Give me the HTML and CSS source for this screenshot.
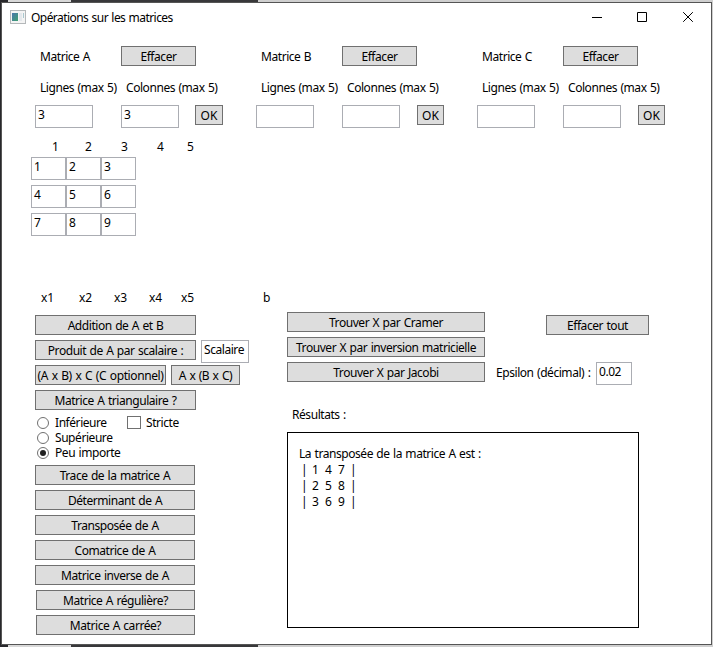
FILE: index.html
```html
<!DOCTYPE html>
<html lang="fr">
<head>
<meta charset="utf-8">
<title>Opérations sur les matrices</title>
<link rel="stylesheet" href="styles.css">
</head>
<body>
<main class="window">
  <header class="titlebar">
    <svg class="app-icon" width="16" height="14" viewBox="0 0 16 14"><defs><linearGradient id="screen" x2="1" y2="1"><stop stop-color="#4a76ad"/><stop offset="1" stop-color="#3fa070"/></linearGradient></defs><rect x=".5" y=".5" width="15" height="13" fill="#f4f4f4" stroke="#b4b8ba"/><rect x="2" y="3" width="6" height="8" fill="url(#screen)"/><rect x="9" y="3" width="3" height="8" fill="#e4e8ec"/><rect x="13" y="3" width="1" height="5" fill="#a9c8cf"/></svg>
    <h1 class="title">Opérations sur les matrices</h1>
    <svg class="controls" width="101" height="10" viewBox="0 0 101 10" fill="none" stroke="#000"><path d="M0 5.500H10M45.500.500h9v9h-9zM91.200.200l9.600 9.600M100.800.200l-9.600 9.600"/></svg>
  </header>

  <section class="matrices">
    <div class="matrix">
      <div class="matrix-head"><span>Matrice A</span><button class="btn clear">Effacer</button></div>
      <div class="size-labels"><span>Lignes (max 5)</span><span>Colonnes (max 5)</span></div>
      <div class="size-fields"><div class="field">3</div><div class="field">3</div><button class="btn ok wide">OK</button></div>
    </div>
    <div class="matrix">
      <div class="matrix-head"><span>Matrice B</span><button class="btn clear">Effacer</button></div>
      <div class="size-labels"><span>Lignes (max 5)</span><span>Colonnes (max 5)</span></div>
      <div class="size-fields"><div class="field"></div><div class="field"></div><button class="btn ok">OK</button></div>
    </div>
    <div class="matrix">
      <div class="matrix-head"><span>Matrice C</span><button class="btn clear">Effacer</button></div>
      <div class="size-labels"><span>Lignes (max 5)</span><span>Colonnes (max 5)</span></div>
      <div class="size-fields"><div class="field"></div><div class="field"></div><button class="btn ok">OK</button></div>
    </div>
  </section>

  <div class="col-numbers"><span>1</span><span>2</span><span>3</span><span>4</span><span>5</span></div>
  <section class="cells">
    <div class="field">1</div><div class="field">2</div><div class="field">3</div>
    <div class="field">4</div><div class="field">5</div><div class="field">6</div>
    <div class="field">7</div><div class="field">8</div><div class="field">9</div>
  </section>
  <div class="unknowns"><span>x1</span><span>x2</span><span>x3</span><span>x4</span><span>x5</span><span>b</span></div>

  <div class="workspace">
    <section class="operations">
      <button class="btn op">Addition de A et B</button>
      <div class="row"><button class="btn op">Produit de A par scalaire :</button><div class="field scalar">Scalaire</div></div>
      <div class="row"><button class="btn triple">(A x B) x C (C optionnel)</button><button class="btn pair">A x (B x C)</button></div>
      <button class="btn op">Matrice A triangulaire ?</button>
      <div class="options">
        <div class="radios">
          <label class="option"><i class="radio"></i>Inférieure</label>
          <label class="option"><i class="radio"></i>Supérieure</label>
          <label class="option"><i class="radio checked"></i>Peu importe</label>
        </div>
        <label class="option strict"><i class="check"></i>Stricte</label>
      </div>
      <button class="btn query">Trace de la matrice A</button>
      <button class="btn query">Déterminant de A</button>
      <button class="btn query">Transposée de A</button>
      <button class="btn query">Comatrice de A</button>
      <button class="btn query">Matrice inverse de A</button>
      <button class="btn query inset">Matrice A régulière?</button>
      <button class="btn query inset">Matrice A carrée?</button>
    </section>
    <section class="solving">
      <div class="solvers">
        <div class="methods">
          <button class="btn">Trouver X par Cramer</button>
          <button class="btn">Trouver X par inversion matricielle</button>
          <button class="btn">Trouver X par Jacobi</button>
        </div>
        <div class="extras">
          <button class="btn clear-all">Effacer tout</button>
          <div class="epsilon"><span>Epsilon (décimal) :</span><div class="field">0.02</div></div>
        </div>
      </div>
      <div class="results-label">Résultats :</div>
      <div class="results">
        <div class="result-title">La transposée de la matrice A est :</div>
        <div class="line"><b>|</b><span>1</span><span>4</span><span>7</span><b>|</b></div>
        <div class="line"><b>|</b><span>2</span><span>5</span><span>8</span><b>|</b></div>
        <div class="line"><b>|</b><span>3</span><span>6</span><span>9</span><b>|</b></div>
      </div>
    </section>
  </div>
</main>
</body>
</html>
```
FILE: styles.css
```css
* { box-sizing: border-box; }
body {
  margin: 0;
  width: 713px;
  height: 647px;
  padding: 2px 1px 2px 1px;
  overflow: hidden;
  font: 12px/16px "Noto Sans", sans-serif;
  letter-spacing: -0.44px;
  word-spacing: 0.7px;
  color: #000;
  white-space: nowrap;
  background:
    linear-gradient(#28282b, #28282b) 0 0 / 1px 100% no-repeat,
    linear-gradient(90deg, #28282b 8px, #d8d8d8 8px 71px, #38383a 71px 258px, #cfcfcf 258px);
}
.window {
  height: 643px;
  width: 711px;
  border: 1px solid #555;
  background: #fff;
  display: flex;
  flex-direction: column;
}
.titlebar { display: flex; height: 30px; padding: 7px 18px 0 8px; }
.title { margin: 0 0 0 5px; font-size: 12px; font-weight: 400; line-height: 16px; letter-spacing: -0.55px; }
.controls { margin: 2px 0 0 auto; }
.btn {
  height: 20px;
  padding: 2px 0 0;
  border: 1px solid #707070;
  border-radius: 0;
  background: #ddd;
  font: inherit;
  line-height: 16px;
  letter-spacing: inherit;
  word-spacing: inherit;
  color: inherit;
  text-align: center;
  flex: none;
}
.field { height: 23px; border: 1px solid #abadb3; padding: 1px 2px; line-height: 16px; background: #fff; }
.matrices { display: grid; grid-template-columns: repeat(3, 221px); padding: 13px 0 0 33px; height: 105px; }
.matrix-head { display: grid; grid-template-columns: 81px 75px; padding-left: 5px; line-height: 21px; height: 34px; }
.matrix-head .btn { margin-left: 0; }
.size-labels { display: grid; grid-template-columns: 86px 1fr; padding-left: 5px; height: 25px; }
.size-fields { display: grid; grid-template-columns: 58px 58px 28px; column-gap: 28px; }
.size-fields .ok { margin-left: -11px; width: 27px; letter-spacing: 0; }
.size-fields .ok.wide { margin-left: -12px; width: 28px; }
.col-numbers { display: grid; grid-template-columns: 33px 36px 36px 30px 20px; padding-left: 50px; height: 16px; margin-top: 1px; }
.cells { display: grid; grid-template-columns: repeat(3, 35px); row-gap: 5px; padding: 2px 0 0 29px; height: 135px; align-content: start; }
.unknowns { display: grid; grid-template-columns: 38px 35px 35px 32px 82px 20px; padding: 0 0 0 39px; height: 22px; letter-spacing: -0.2px; }
.workspace { display: flex; padding-left: 33px; }
.operations { width: 252px; display: flex; flex-direction: column; gap: 5px; padding-top: 3px; }
.row { display: flex; height: 20px; gap: 5px; }
.op { width: 161px; }
.triple { width: 131px; letter-spacing: -0.4px; word-spacing: 0.9px; }
.pair { width: 69px; }
.scalar { width: 48px; }
.options { display: flex; height: 45px; }
.radios { width: 92px; }
.option { display: flex; align-items: center; height: 15px; line-height: 15px; }
.radio { width: 12px; height: 12px; margin: 0 6px 0 2px; border: 1px solid #707070; border-radius: 50%; display: grid; place-items: center; }
.radio.checked::after { content: ""; width: 6px; height: 6px; border-radius: 50%; background: #212121; }
.check { width: 14px; height: 13px; margin-right: 5px; border: 1px solid #707070; }
.query { width: 160px; }
.inset { width: 159px; margin-left: 1px; }
.solvers { display: flex; height: 93px; }
.methods { width: 198px; display: flex; flex-direction: column; gap: 5px; }
.extras { padding: 3px 0 0 11px; }
.clear-all { width: 103px; margin: 0 0 27px 50px; display: block; }
.epsilon { display: grid; grid-template-columns: 100px 36px; line-height: 21px; }
.results-label { height: 27px; padding: 2px 0 0 5px; }
.results { width: 352px; height: 196px; border: 1px solid #000; padding: 13px 11px; }
.line { display: grid; grid-template-columns: 11px 13px 13px 12px 5px; padding-left: 2px; height: 16px; }
.line b { font-weight: 400; }
```
